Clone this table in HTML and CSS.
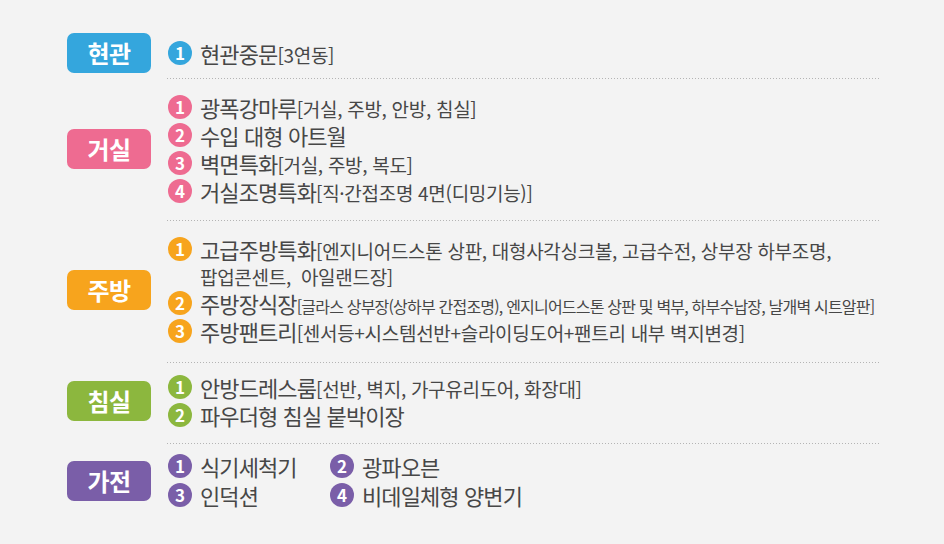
FILE: index.html
```html
<!DOCTYPE html>
<html lang="ko">
<head>
<meta charset="utf-8">
<title>옵션 안내</title>
<link rel="stylesheet" href="styles.css">
</head>
<body>
<div class="spec">
  <section class="row row--entry c-blue">
    <div class="tag">현관</div>
    <ul class="items">
      <li class="item"><span class="num">1</span><span class="txt">현관중문<span class="sub">[3연동]</span></span></li>
    </ul>
  </section>
  <div class="sep"></div>
  <section class="row row--living c-pink">
    <div class="tag">거실</div>
    <ul class="items">
      <li class="item"><span class="num">1</span><span class="txt">광폭강마루<span class="sub">[거실, 주방, 안방, 침실]</span></span></li>
      <li class="item"><span class="num">2</span><span class="txt">수입 대형 아트월</span></li>
      <li class="item"><span class="num">3</span><span class="txt">벽면특화<span class="sub">[거실, 주방, 복도]</span></span></li>
      <li class="item"><span class="num">4</span><span class="txt">거실조명특화<span class="sub">[직·간접조명 4면(디밍기능)]</span></span></li>
    </ul>
  </section>
  <div class="sep"></div>
  <section class="row row--kitchen c-orange">
    <div class="tag">주방</div>
    <ul class="items">
      <li class="item"><span class="num">1</span><span class="txt">고급주방특화<span class="sub">[엔지니어드스톤 상판, 대형사각싱크볼, 고급수전, 상부장 하부조명,<br>팝업콘센트,&nbsp; 아일랜드장]</span></span></li>
      <li class="item"><span class="num">2</span><span class="txt">주방장식장<span class="sub sub--tight">[글라스 상부장(상하부 간접조명), 엔지니어드스톤 상판 및 벽부, 하부수납장, 날개벽 시트알판]</span></span></li>
      <li class="item"><span class="num">3</span><span class="txt">주방팬트리<span class="sub">[센서등+시스템선반+슬라이딩도어+팬트리 내부 벽지변경]</span></span></li>
    </ul>
  </section>
  <div class="sep"></div>
  <section class="row row--bed c-green">
    <div class="tag">침실</div>
    <ul class="items">
      <li class="item"><span class="num">1</span><span class="txt">안방드레스룸<span class="sub">[선반, 벽지, 가구유리도어, 화장대]</span></span></li>
      <li class="item"><span class="num">2</span><span class="txt">파우더형 침실 붙박이장</span></li>
    </ul>
  </section>
  <div class="sep"></div>
  <section class="row row--appl c-purple">
    <div class="tag">가전</div>
    <ul class="items items--grid">
      <li class="item"><span class="num">1</span><span class="txt">식기세척기</span></li>
      <li class="item"><span class="num">2</span><span class="txt">광파오븐</span></li>
      <li class="item"><span class="num">3</span><span class="txt">인덕션</span></li>
      <li class="item"><span class="num">4</span><span class="txt">비데일체형 양변기</span></li>
    </ul>
  </section>
</div>
</body>
</html>
```

FILE: styles.css
```css
* { box-sizing: border-box; }

html, body {
  margin: 0;
  padding: 0;
  background: #f3f3f3;
}

body {
  width: 944px;
  height: 544px;
  overflow: hidden;
  font-family: "Noto Sans CJK KR", "Noto Sans", sans-serif;
  color: #474747;
}

.spec {
  padding-left: 67px;
}

.c-blue { --c: #34a6dd; }
.c-pink { --c: #ee6b91; }
.c-orange { --c: #f7a41d; }
.c-green { --c: #8cb73e; }
.c-purple { --c: #7a5ea8; }

.row {
  display: flex;
  align-items: center;
}

.row--entry { padding: 33px 0 5px; }
.row--living { padding: 15px 0 16px; }
.row--kitchen { padding: 15px 0 18px; }
.row--bed { padding: 11px 0 15px; }
.row--appl { padding: 9px 0 0; }

.tag {
  flex: none;
  width: 84px;
  height: 40px;
  margin-right: 16px;
  border-radius: 7px;
  background: var(--c);
  color: #fff;
  font-size: 24px;
  font-weight: 700;
  line-height: 40px;
  text-align: center;
  letter-spacing: -0.5px;
}

.items {
  list-style: none;
  margin: 0;
  padding: 0;
  display: flex;
  flex-direction: column;
  gap: 2px;
}

.items--grid {
  display: grid;
  grid-template-columns: 160px auto;
  row-gap: 3px;
}

.item {
  display: flex;
  align-items: flex-start;
  white-space: nowrap;
  font-size: 22px;
  line-height: 26px;
}

.num {
  flex: none;
  width: 24px;
  height: 24px;
  margin: 1px 8px 0 1px;
  border-radius: 50%;
  background: var(--c);
  color: #fff;
  font-size: 17px;
  font-weight: 700;
  line-height: 24px;
  text-align: center;
}

.txt {
  display: block;
  font-size: 22px;
  font-weight: 400;
  line-height: 26px;
  letter-spacing: -0.9px;
}

.sub {
  font-size: 19px;
  line-height: 1;
  letter-spacing: -0.3px;
}

.sub--tight {
  font-size: 16px;
  letter-spacing: -0.8px;
}

.sep {
  margin-left: 100px;
  width: 712px;
  height: 1px;
  background-image: linear-gradient(to right, #b4b4b4 1px, transparent 1px);
  background-size: 3px 1px;
}
```
